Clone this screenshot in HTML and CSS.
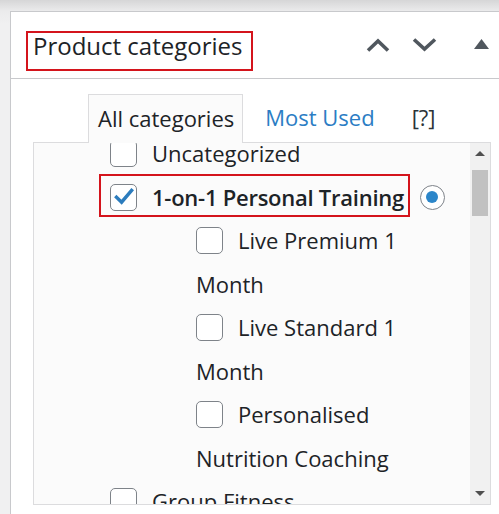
FILE: index.html
```html
<!DOCTYPE html>
<html lang="en">
<head>
<meta charset="utf-8">
<title>Product categories</title>
<link rel="stylesheet" href="styles.css">
</head>
<body>
<div class="wrap">
  <div class="postbox">
    <div class="postbox-header">
      <h2 class="hndle"><span class="mark-title">Product categories</span></h2>
      <div class="handle-actions">
        <svg class="ico up" width="24" height="14" viewBox="0 0 24 14"><polyline points="2,12.5 12,3 22,12.5" fill="none" stroke="#50575e" stroke-width="3.6"/></svg>
        <svg class="ico down" width="25" height="14" viewBox="0 0 25 14"><polyline points="2,1.5 12.5,11 23,1.5" fill="none" stroke="#50575e" stroke-width="3.6"/></svg>
        <svg class="ico tri" width="15" height="10" viewBox="0 0 15 10"><polygon points="7.5,0 15,10 0,10" fill="#50575e"/></svg>
      </div>
    </div>
    <div class="inside">
      <ul class="category-tabs">
        <li class="tab active">All categories</li>
        <li class="tab link">Most Used</li>
        <li class="tab help">[?]</li>
      </ul>
      <div class="tabs-panel">
        <div class="panel-scroll">
          <ul class="checklist">
            <li><label class="top"><span class="cb"></span>Uncategorized</label></li>
            <li>
              <div class="row">
                <label class="top marked"><span class="cb checked"><svg width="24" height="24" viewBox="0 0 24 24"><path d="M4.5 12.2 L9.6 17.2 L19.6 5.4" fill="none" stroke="#2c7cbd" stroke-width="3.4" stroke-linecap="square" stroke-linejoin="miter"/></svg></span>1-on-1 Personal Training</label>
                <span class="radio"><span class="dot"></span></span>
              </div>
              <ul class="children">
                <li><label><span class="cb"></span>Live Premium 1 Month</label></li>
                <li><label><span class="cb"></span>Live Standard 1 Month</label></li>
                <li><label><span class="cb"></span>Personalised Nutrition Coaching</label></li>
              </ul>
            </li>
            <li><label class="top"><span class="cb"></span>Group Fitness</label></li>
          </ul>
        </div>
        <div class="scrollbar">
          <div class="sb-btn"><span class="arr-up"></span></div>
          <div class="sb-thumb"></div>
          <div class="sb-btn sb-bottom"><span class="arr-down"></span></div>
        </div>
      </div>
    </div>
  </div>
</div>
</body>
</html>
```
FILE: styles.css
```css
html, body {
  margin: 0;
  padding: 0;
  height: 100%;
  overflow: hidden;
}
body {
  background: linear-gradient(#d6d6d7 0px, #ebebec 11px, #f0f0f1 24px);
  font-family: "Open Sans", "Noto Sans", sans-serif;
  color: #1d2327;
}
.wrap {
  padding: 11px 0 0 10px;
}
.postbox {
  width: 520px;
  height: 520px;
  box-sizing: border-box;
  background: #fff;
  border: 1px solid #c8c9cc;
}
.postbox-header {
  display: flex;
  align-items: center;
  height: 66px;
  border-bottom: 1px solid #c8c9cc;
  padding: 0 40px 0 15px;
}
.hndle {
  margin: 0;
  align-self: flex-start;
  margin-top: 19px;
  font-weight: 400;
  font-size: 24px;
}
.mark-title {
  display: block;
  white-space: nowrap;
  border: 2px solid #d4141c;
  padding: 0 9px 10px 5px;
  line-height: 26px;
}
.handle-actions {
  margin-left: auto;
  display: flex;
  align-items: center;
}
.ico { display: block; }
.ico.down { margin-left: 22px; }
.ico.tri { margin-left: 37px; margin-top: -2px; }

.inside {
  padding: 15px 0 0 22px;
}
.category-tabs {
  list-style: none;
  margin: 0;
  padding: 0 0 0 55px;
  display: flex;
  align-items: flex-start;
  font-size: 22px;
  line-height: 47px;
}
.tab {
  position: relative;
  z-index: 1;
}
.tab.active {
  border: 1px solid #dcdcde;
  border-bottom: none;
  background: #fbfbfb;
  padding: 0 8px 1px 9px;
  margin-bottom: -1px;
}
.tab.link {
  color: #2b7dc4;
  margin-left: 22px;
}
.tab.help {
  color: #2c3338;
  margin-left: 37px;
}
.tabs-panel {
  width: 458px;
  height: 363px;
  box-sizing: border-box;
  border: 1px solid #dcdcde;
  background: #fbfbfb;
  display: flex;
}
.panel-scroll {
  flex: 1;
  overflow: hidden;
}
.checklist {
  list-style: none;
  margin: -11px 0 0 0;
  padding: 0 0 0 65px;
  font-size: 22px;
  line-height: 43.5px;
}
.checklist ul {
  list-style: none;
}
.checklist li {
  margin: 0;
  padding: 0;
}
label {
  display: block;
}
label.top {
  padding-left: 11px;
}
.row {
  display: flex;
  align-items: center;
}
.marked {
  position: relative;
  font-weight: 600;
  letter-spacing: -0.25px;
  padding-right: 6px;
  white-space: nowrap;
}
.marked::after {
  content: "";
  position: absolute;
  left: 0;
  right: 0;
  top: -2px;
  bottom: 2px;
  border: 2px solid #d4141c;
}
.children {
  margin: 0 53px 0 0;
  padding: 0 0 0 97px;
}
.cb {
  display: inline-block;
  box-sizing: border-box;
  width: 27px;
  height: 27px;
  border: 1.5px solid #7e8389;
  border-radius: 5px;
  background: #fff;
  vertical-align: -5px;
  margin-right: 15px;
  position: relative;
}
.cb svg {
  display: block;
  margin: 0.5px 0 0 0.5px;
}
.radio {
  box-sizing: border-box;
  width: 25px;
  height: 25px;
  border: 1.5px solid #7e8389;
  border-radius: 50%;
  background: #fff;
  margin-left: 10px;
  display: flex;
  align-items: center;
  justify-content: center;
}
.radio .dot {
  width: 12px;
  height: 12px;
  border-radius: 50%;
  background: #2c86c9;
}
.scrollbar {
  width: 20px;
  background: #f1f1f1;
  display: flex;
  flex-direction: column;
  align-items: center;
}
.sb-btn {
  height: 21px;
  width: 20px;
  display: flex;
  align-items: center;
  justify-content: center;
}
.sb-bottom {
  margin-top: auto;
  height: 22px;
}
.arr-up {
  width: 0;
  height: 0;
  border-left: 5px solid transparent;
  border-right: 5px solid transparent;
  border-bottom: 5px solid #505050;
}
.arr-down {
  width: 0;
  height: 0;
  border-left: 5px solid transparent;
  border-right: 5px solid transparent;
  border-top: 5px solid #505050;
}
.sb-thumb {
  margin-top: 6px;
  width: 16px;
  height: 46px;
  background: #c1c1c1;
}
```
